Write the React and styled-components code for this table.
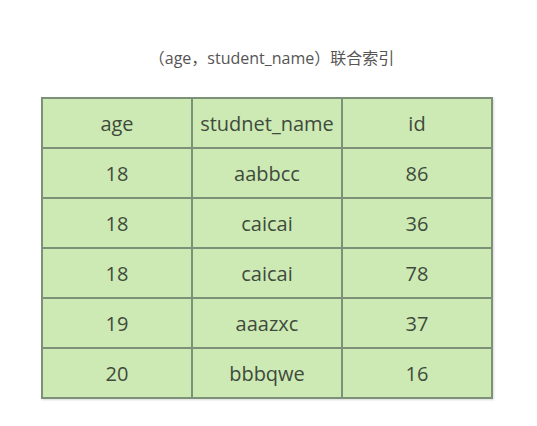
import React from "react";
import styled, { createGlobalStyle } from "styled-components";

const GlobalStyle = createGlobalStyle`
  body {
    margin: 0;
    background: #ffffff;
    font-family: "Open Sans", "Noto Sans CJK SC", sans-serif;
  }
`;

const rows = [
  ["18", "aabbcc", "86"],
  ["18", "caicai", "36"],
  ["18", "caicai", "78"],
  ["19", "aaazxc", "37"],
  ["20", "bbbqwe", "16"],
];

const App = () => {
  return (
    <Page>
      <GlobalStyle />
      <Title>（age，student_name）联合索引</Title>
      <Table>
        <thead>
          <tr>
            <Cell as="th">age</Cell>
            <Cell as="th">studnet_name</Cell>
            <Cell as="th">id</Cell>
          </tr>
        </thead>
        <tbody>
          {rows.map((r, i) => (
            <tr key={i}>
              {r.map((v, j) => (
                <Cell key={j}>{v}</Cell>
              ))}
            </tr>
          ))}
        </tbody>
      </Table>
    </Page>
  );
};

export default App;

const Page = styled.div`
  width: 537px;
  height: 426px;
  display: flex;
  flex-direction: column;
  align-items: center;
  padding-top: 46px;
  box-sizing: border-box;
`;

const Title = styled.div`
  font-size: 16px;
  color: #555;
  height: 24px;
  line-height: 24px;
  margin-bottom: 27px;
  margin-left: 6px;
`;

const Table = styled.table`
  border-collapse: collapse;
  margin-right: 3px;
  box-shadow: 1px 1px 2px rgba(0, 0, 0, 0.15);
`;

const Cell = styled.td`
  width: 150px;
  height: 50px;
  padding: 0;
  box-sizing: border-box;
  background: #cdeab4;
  border: 2px solid #7d9078;
  text-align: center;
  font-size: 20px;
  font-weight: normal;
  color: #3f4a3c;
`;
